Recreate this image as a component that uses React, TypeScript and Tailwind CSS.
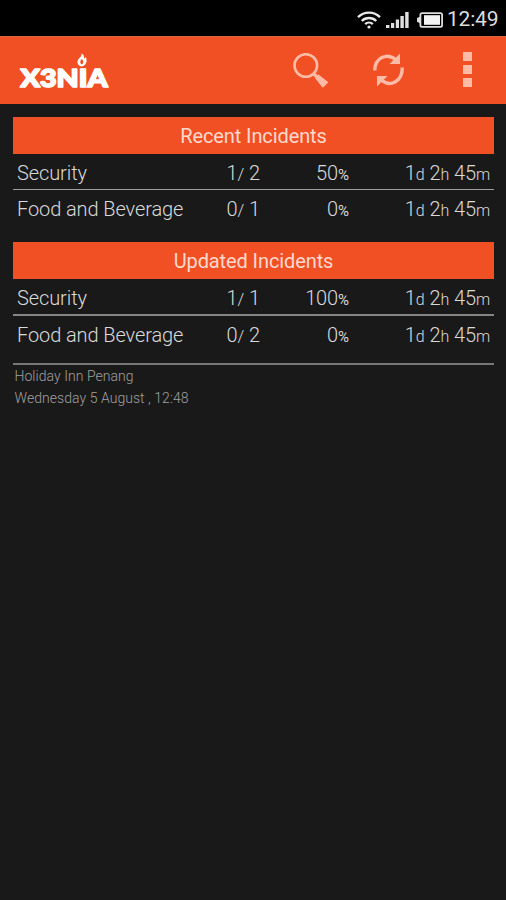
type Incident = {
  name: string;
  open: string;
  total: string;
  percent: string;
};

const recent: Incident[] = [
  { name: 'Security', open: '1', total: '2', percent: '50' },
  { name: 'Food and Beverage', open: '0', total: '1', percent: '0' },
];

const updated: Incident[] = [
  { name: 'Security', open: '1', total: '1', percent: '100' },
  { name: 'Food and Beverage', open: '0', total: '2', percent: '0' },
];

function StatusBar() {
  return (
    <div className="h-9 shrink-0 bg-black flex items-center justify-end pr-2 pt-[3px]">
      <svg className="w-6 h-[18px]" viewBox="0 0 24 18" fill="none" stroke="#e8e8e8" strokeWidth="2.4">
        <path d="M1 6.2a15.5 15.5 0 0 1 22 0" />
        <path d="M4.8 10a10.2 10.2 0 0 1 14.4 0" />
        <path d="M8.2 13.2a5.4 5.4 0 0 1 7.6 0" />
        <circle cx="12" cy="16" r="1.6" fill="#e8e8e8" stroke="none" />
      </svg>
      <svg className="w-[23px] h-[17px] ml-[5px]" viewBox="0 0 23 17" fill="#e0e0e0">
        <rect x="0" y="14" width="3.4" height="3" />
        <rect x="5" y="12" width="3.2" height="5" />
        <rect x="9.8" y="8.5" width="3.2" height="8.5" />
        <rect x="14.4" y="5" width="3.4" height="12" />
        <rect x="19.2" y="1" width="3.4" height="16" />
      </svg>
      <svg className="w-[27px] h-4 ml-[7px]" viewBox="0 0 27 16">
        <path d="M6 1.2h18.5a1.6 1.6 0 0 1 1.6 1.6v10.4a1.6 1.6 0 0 1-1.6 1.6H6a1.6 1.6 0 0 1-1.6-1.6V2.8A1.6 1.6 0 0 1 6 1.2z" fill="none" stroke="#dedede" strokeWidth="1.8" />
        <path d="M1 6l3.5-1.6v7.2L1 9.8z" fill="#dedede" />
        <rect x="8" y="3.2" width="16" height="9.6" fill="#f4f4f4" />
      </svg>
      <span className="ml-[4px] w-[51px] text-[21px] leading-none tracking-[-0.2px] text-[#dcdcdc] whitespace-nowrap">12:49</span>
    </div>
  );
}

function Logo() {
  return (
    <svg className="w-[92px] h-12 shrink-0 overflow-visible" viewBox="0 0 92 48" fill="#fff">
      <text
        x="2.5"
        y="35.5"
        textLength="87"
        lengthAdjust="spacingAndGlyphs"
        fontFamily="Lato, sans-serif"
        fontWeight="900"
        fontSize="25.5"
        stroke="#fff"
        strokeWidth="1.7"
        strokeLinejoin="round"
      >
        X3NIA
      </text>
      <path
        fillRule="evenodd"
        d="M63.5 2.5c3.8 2 1.9 4 3 4.8.7-.1 1-.7 1.2-1.6 2.2 4.7.2 8.8-4 9.8-5.3-1-5.1-6-2.2-8.5 1.6-1.4 2.1-2.5 2-4.5zM63.8 8c-2 2-2.2 4-.2 5.6 2.5-1.3 2.2-3.5.2-5.6z"
      />
    </svg>
  );
}

function Header() {
  return (
    <header className="h-[68px] shrink-0 bg-[#f05023] border-t border-t-[#d86642] flex items-center pl-[18px] pr-[34px]">
      <div className="h-full pt-[14px]">
        <Logo />
      </div>
      <div className="ml-auto flex items-center">
        <svg className="w-9 h-9" viewBox="0 0 36 36" fill="none">
          <circle cx="12.8" cy="12.5" r="11.3" stroke="#ffbba6" strokeWidth="2.6" />
          <path d="M20.5 20.500l4 4" stroke="#ffbba6" strokeWidth="3.2" />
          <path d="M22.800 24.800l2.500-2.500 9 7-4.500 4.500z" fill="#ffbba6" stroke="#ffbba6" strokeWidth="1.500" strokeLinejoin="round" />
        </svg>
        <svg className="w-[34px] h-9 ml-[43px]" viewBox="0 0 34 36" fill="none">
          <path d="M2.8 17.5C2.8 4.500 15 -.5 23.500 6.500" stroke="#ffbba6" strokeWidth="3.400" />
          <path d="M28 .5v10.500H17.500z" fill="#ffbba6" />
          <path d="M30.300 14.500C30.300 29 18 34.500 9.500 27" stroke="#ffbba6" strokeWidth="3.400" />
          <path d="M5 33.500V23H15.500z" fill="#ffbba6" />
        </svg>
        <div className="ml-[57px] flex flex-col gap-[4px] pb-[3px]">
          <div className="w-[9px] h-[9px] bg-[#ffbba6]"></div>
          <div className="w-[9px] h-[9px] bg-[#ffbba6]"></div>
          <div className="w-[9px] h-[9px] bg-[#ffbba6]"></div>
        </div>
      </div>
    </header>
  );
}

function Row({ item, className }: { item: Incident; className: string }) {
  return (
    <div className={`grid grid-cols-[171px_72px_89px_1fr] items-center px-1 text-[20px] tracking-[-0.1px] font-light leading-none text-[#dadada] whitespace-nowrap ${className}`}>
      <div>{item.name}</div>
      <div className="text-right">
        {item.open}
        <span className="text-[17px]">/</span> {item.total}
      </div>
      <div className="text-right">
        {item.percent}
        <span className="text-[15px] font-normal">%</span>
      </div>
      <div className="text-right">
        1<span className="text-[16px]">d</span> 2<span className="text-[16px]">h</span> 45<span className="text-[16px]">m</span>
      </div>
    </div>
  );
}

function Band({ title }: { title: string }) {
  return (
    <h2 className="bg-[#f05023] text-[#ffd9cd] text-[20px] tracking-[-0.1px] leading-none flex items-center justify-center h-[37px]">
      {title}
    </h2>
  );
}

export default function App() {
  return (
    <div className="w-full h-[900px] bg-[#191919] flex flex-col font-['Roboto',sans-serif]">
      <StatusBar />
      <Header />
      <main className="pl-[13px] pr-3 pt-[13px]">
        <Band title="Recent Incidents" />
        <Row item={recent[0]} className="h-[36px] pt-[2px] border-b border-[#a0a0a0]" />
        <Row item={recent[1]} className="h-[38px]" />

        <div className="mt-[14px]">
          <Band title="Updated Incidents" />
          <Row item={updated[0]} className="h-[37px] pt-[2px] border-b-2 border-[#858585]" />
          <Row item={updated[1]} className="h-[37px]" />
        </div>

        <div className="mt-[10px] border-t-2 border-[#777] pl-[1.5px] text-[14px] leading-[22px] tracking-[0.05px] font-light text-[#a0a0a0]">
          <div>Holiday Inn Penang</div>
          <div>Wednesday 5 August , 12:48</div>
        </div>
      </main>
    </div>
  );
}
